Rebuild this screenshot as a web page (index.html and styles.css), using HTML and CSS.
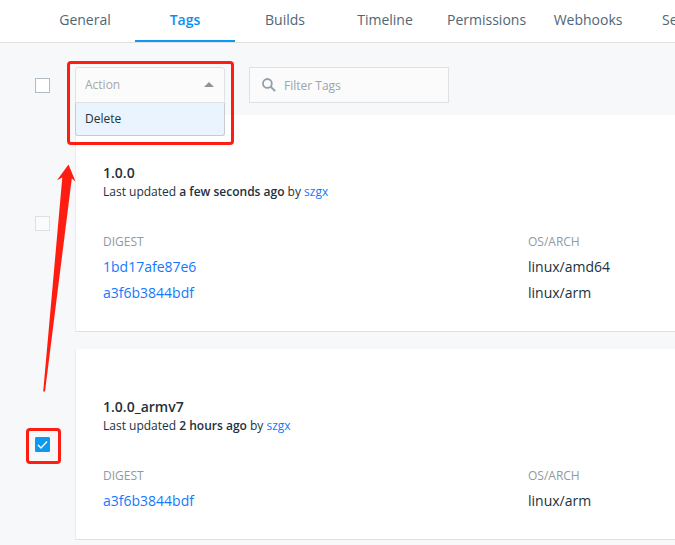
FILE: index.html
```html
<!DOCTYPE html>
<html lang="en">
<head>
<meta charset="utf-8">
<title>Repository tags</title>
<link rel="stylesheet" href="styles.css">
</head>
<body>
<nav class="tabs">
  <a class="tab" href="#general">General</a>
  <a class="tab tab-active" href="#tags" aria-current="page">Tags</a>
  <a class="tab" href="#builds">Builds</a>
  <a class="tab" href="#timeline">Timeline</a>
  <a class="tab" href="#permissions">Permissions</a>
  <a class="tab" href="#webhooks">Webhooks</a>
  <a class="tab" href="#settings">Settings</a>
</nav>
<main class="page">
  <div class="row toolbar">
    <div class="pick"><input class="check" type="checkbox" aria-label="Select all tags"></div>
    <div class="action">
      <select class="action-select" aria-label="Action">
        <option>Action</option>
      </select>
      <svg class="caret" width="10" height="5" viewBox="0 0 10 5" aria-hidden="true"><path d="M0 5L5 0l5 5z" fill="#8f9594"/></svg>
      <div class="menu"><button class="menu-item" type="button">Delete</button></div>
      <div class="mark mark-action"></div>
    </div>
    <label class="filter">
      <svg class="search" width="14" height="14" viewBox="0 0 14 14" aria-hidden="true"><circle cx="5.4" cy="5.4" r="4.4" fill="none" stroke="#8fa0ac" stroke-width="1.8"/><path d="M8.6 8.6l4.5 4.5" stroke="#8fa0ac" stroke-width="2"/></svg>
      <input class="filter-input" type="text" placeholder="Filter Tags" aria-label="Filter Tags">
    </label>
  </div>

  <section class="row">
    <div class="pick"><input class="check" type="checkbox" aria-label="Select 1.0.0" disabled></div>
    <article class="card">
      <h2 class="name">1.0.0</h2>
      <p class="updated">Last updated <strong>a few seconds ago</strong> by <a href="#szgx">szgx</a></p>
      <table class="images">
        <thead><tr><th class="digest">DIGEST</th><th>OS/ARCH</th></tr></thead>
        <tbody>
          <tr><td><a href="#1bd17afe87e6">1bd17afe87e6</a></td><td>linux/amd64</td></tr>
          <tr><td><a href="#a3f6b3844bdf">a3f6b3844bdf</a></td><td>linux/arm</td></tr>
        </tbody>
      </table>
    </article>
  </section>

  <section class="row">
    <div class="pick">
      <input class="check" type="checkbox" aria-label="Select 1.0.0_armv7" checked>
      <div class="mark mark-check"></div>
    </div>
    <article class="card">
      <h2 class="name">1.0.0_armv7</h2>
      <p class="updated">Last updated <strong>2 hours ago</strong> by <a href="#szgx">szgx</a></p>
      <table class="images">
        <thead><tr><th class="digest">DIGEST</th><th>OS/ARCH</th></tr></thead>
        <tbody>
          <tr><td><a href="#a3f6b3844bdf">a3f6b3844bdf</a></td><td>linux/arm</td></tr>
        </tbody>
      </table>
    </article>
  </section>
  <svg class="arrow" width="34" height="228" viewBox="0 0 34 228" aria-hidden="true"><path d="M26.500 .5L33.500 17.500l-3.700-3L3 227.500H1.200L20.300 13.600L15 16.300z" fill="#ff1d12"/></svg>
</main>
</body>
</html>
```

FILE: styles.css
```css
* {
  box-sizing: border-box;
}

body {
  margin: 0;
  background: #f7f8fa;
  color: #22313b;
  font: 14px/20px "Open Sans", sans-serif;
  overflow: hidden;
}

a {
  color: #1478ff;
  text-decoration: none;
}

.tabs {
  display: flex;
  padding-left: 35px;
  background: #fff;
  border-bottom: 1px solid #dfe1e3;
  overflow: hidden;
}

.tab {
  flex: none;
  min-width: 100px;
  padding: 10px 12px;
  border-bottom: 2px solid transparent;
  color: #516675;
  text-align: center;
}

.tab-active {
  border-color: #0d99ee;
  color: #0d8eee;
  font-weight: 600;
}

.page {
  position: relative;
}

.row {
  display: flex;
  align-items: center;
  margin-bottom: 17px;
}

.toolbar {
  margin-bottom: 0;
  padding: 24px 0 12px;
}

.pick {
  position: relative;
  display: flex;
  flex: none;
  width: 75px;
  padding-left: 35px;
}

.check {
  appearance: none;
  width: 15px;
  height: 15px;
  margin: 0;
  border: 1px solid #b0bbc2;
  background: #fff;
}

.check:disabled {
  border-color: #dde0e7;
  background: #fafbfb;
}

.check:checked {
  border-color: #0d99ee;
  border-radius: 1px;
  background: #0d99ee url("data:image/svg+xml,%3Csvg xmlns='http://www.w3.org/2000/svg' viewBox='0 0 13 13'%3E%3Cpath d='M2 7l3 3 6-6.500' fill='none' stroke='white' stroke-width='1.400'/%3E%3C/svg%3E") center / 13px 13px no-repeat;
}

.action {
  position: relative;
  width: 150px;
  margin-right: 24px;
}

.action-select {
  appearance: none;
  display: block;
  width: 100%;
  height: 36px;
  padding: 0 9px;
  border: 1px solid #dfe1e4;
  border-radius: 3px 3px 0 0;
  background: #fbfbfb;
  color: #a5a7a7;
  font: 12px/20px "Open Sans", sans-serif;
}

.caret {
  position: absolute;
  top: 15px;
  right: 11px;
}

.menu {
  position: absolute;
  z-index: 1;
  top: 36px;
  left: 0;
  width: 100%;
  border: 1px solid #c8ccd0;
  border-top: 0;
  border-radius: 0 0 3px 3px;
  background: #e9f4fe;
}

.menu-item {
  display: block;
  width: 100%;
  padding: 6px 9px;
  border: 0;
  background: none;
  color: #26323a;
  font: 12px/20px "Open Sans", sans-serif;
  text-align: left;
}

.filter {
  display: flex;
  align-items: center;
  gap: 8px;
  width: 200px;
  height: 36px;
  padding: 0 12px;
  border: 1px solid #dfe1e4;
  background: #fbfbfb;
}

.search {
  flex: none;
}

.filter-input {
  flex: 1;
  min-width: 0;
  padding: 2px 0 0;
  border: 0;
  outline: 0;
  background: none;
  font: 12px/20px "Open Sans", sans-serif;
}

.filter-input::placeholder {
  color: #97a6b0;
  opacity: 1;
}

.card {
  flex: 1;
  min-width: 0;
  padding: 48px 0 25px 27px;
  border: 0 solid #dfe1e4;
  border-bottom-width: 1px;
  border-left: 1px solid #eaecef;
  background: #fff;
}

.name {
  margin: 0;
  font-size: 14px;
  font-weight: 600;
  line-height: 20px;
}

.updated {
  margin: 0 0 28px;
  font-size: 12px;
  line-height: 18px;
}

.updated strong {
  font-weight: 600;
}

.images {
  width: 100%;
  border-collapse: collapse;
}

.images th {
  padding: 0;
  color: #8d9ba3;
  font-size: 12px;
  font-weight: 400;
  line-height: 25px;
  text-align: left;
}

.images .digest {
  width: 425px;
}

.images td {
  padding: 0;
  line-height: 26px;
}

.mark {
  position: absolute;
  border: 3px solid #ff1d12;
  border-radius: 4px;
  pointer-events: none;
}

.mark-action {
  z-index: 2;
  top: -6px;
  left: -8px;
  width: 167px;
  height: 84px;
}

.mark-check {
  top: -9px;
  left: 26px;
  width: 35px;
  height: 36px;
}

.arrow {
  position: absolute;
  top: 121px;
  left: 42px;
}
```
